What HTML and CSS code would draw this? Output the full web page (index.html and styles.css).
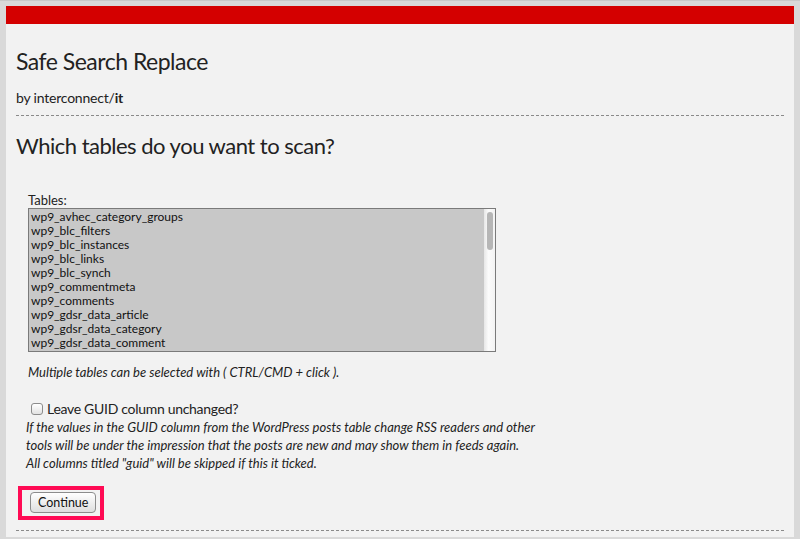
FILE: index.html
```html
<!DOCTYPE html>
<html lang="en">
<head>
<meta charset="utf-8">
<title>Safe Search Replace</title>
<link rel="stylesheet" href="styles.css">
</head>
<body>
<div class="page">
  <header class="header">
    <h1 class="title">Safe Search Replace</h1>
    <p class="byline">by interconnect/<strong>it</strong></p>
  </header>
  <section class="section">
    <h2 class="heading">Which tables do you want to scan?</h2>
    <form class="form">
      <div class="label">Tables:</div>
      <div class="listbox">
        <div class="options">
          <div class="opt">wp9_avhec_category_groups</div>
          <div class="opt">wp9_blc_filters</div>
          <div class="opt">wp9_blc_instances</div>
          <div class="opt">wp9_blc_links</div>
          <div class="opt">wp9_blc_synch</div>
          <div class="opt">wp9_commentmeta</div>
          <div class="opt">wp9_comments</div>
          <div class="opt">wp9_gdsr_data_article</div>
          <div class="opt">wp9_gdsr_data_category</div>
          <div class="opt">wp9_gdsr_data_comment</div>
        </div>
        <div class="scrollbar"><div class="thumb"></div></div>
      </div>
      <p class="hint">Multiple tables can be selected with ( CTRL/CMD + click ).</p>
      <label class="check-row"><input type="checkbox" class="check"> Leave GUID column unchanged?</label>
      <p class="note">If the values in the GUID column from the WordPress posts table change RSS readers and other<br>tools will be under the impression that the posts are new and may show them in feeds again.<br>All columns titled "guid" will be skipped if this it ticked.</p>
      <div class="highlight"><button type="button" class="btn">Continue</button></div>
    </form>
  </section>
</div>
</body>
</html>
```
FILE: styles.css
```css
html, body {
  margin: 0;
  padding: 0;
}
body {
  background: #d9d9d9;
  border-top: 1px solid #c8c8c8;
  height: 538px;
  overflow: hidden;
  font-family: Lato, "Open Sans", sans-serif;
  color: #222;
}
.page {
  margin: 5px 6px 0;
  background: #f2f2f2;
  border-top: 18px solid #d40000;
  padding: 0 10px;
  height: 513px;
}
.header {
  border-bottom: 1px dashed #8a8a8a;
  padding-bottom: 8px;
}
.title {
  margin: 0;
  padding-top: 22px;
  font-size: 23px;
  letter-spacing: -0.5px;
  line-height: 30px;
  font-weight: 400;
}
.byline {
  margin: 13px 0 0;
  font-size: 14px;
  line-height: 18px;
  letter-spacing: -0.2px;
}
.byline strong {
  font-weight: 700;
}
.section {
  border-bottom: 1px dashed #8a8a8a;
  padding-bottom: 10px;
}
.heading {
  margin: 0;
  padding-top: 16px;
  font-size: 22px;
  letter-spacing: -0.5px;
  line-height: 28px;
  font-weight: 400;
}
.form {
  padding: 32px 0 0 12px;
}
.label {
  font-size: 13px;
  line-height: 16px;
}
.listbox {
  display: flex;
  width: 466px;
  height: 142px;
  border: 1px solid #7a7a7a;
  background: #c8c8c8;
}
.options {
  flex: 1;
  overflow: hidden;
  font-size: 12px;
  padding-top: 1px;
}
.opt {
  height: 14px;
  line-height: 14px;
  padding: 0 2px;
  color: #111;
  white-space: nowrap;
}
.scrollbar {
  width: 11px;
  background: linear-gradient(to right, #e6e6e6, #fbfbfb 40%, #f3f3f3);
  padding: 3px 2px 0 3px;
  box-sizing: border-box;
}
.thumb {
  height: 38px;
  border-radius: 3px;
  background: #b6b6b6;
}
.hint {
  margin: 12px 0 0;
  font-size: 13px;
  line-height: 16px;
  font-style: italic;
}
.check-row {
  margin-top: 20px;
  display: flex;
  align-items: center;
  gap: 4px;
  font-size: 14px;
  letter-spacing: -0.3px;
  line-height: 18px;
}
.check {
  appearance: none;
  -webkit-appearance: none;
  width: 12px;
  height: 12px;
  margin: 0 0 0 3px;
  border: 1px solid #8c8c8c;
  border-radius: 3px;
  background: linear-gradient(#ffffff, #e2e2e2);
}
.note {
  margin: 0 0 0 -2px;
  font-size: 13px;
  line-height: 18px;
  font-style: italic;
}
.highlight {
  margin: 14px 0 0 -10px;
  width: 86px;
  box-sizing: border-box;
  border: 4px solid #ff0a54;
  padding: 1px 0 3px 8px;
}
.btn {
  font-family: inherit;
  font-size: 12.5px;
  line-height: 15px;
  color: #111;
  padding: 2px 7px;
  border: 1px solid #8c8c8c;
  border-radius: 4px;
  background: linear-gradient(#ffffff, #dedede);
}
```
